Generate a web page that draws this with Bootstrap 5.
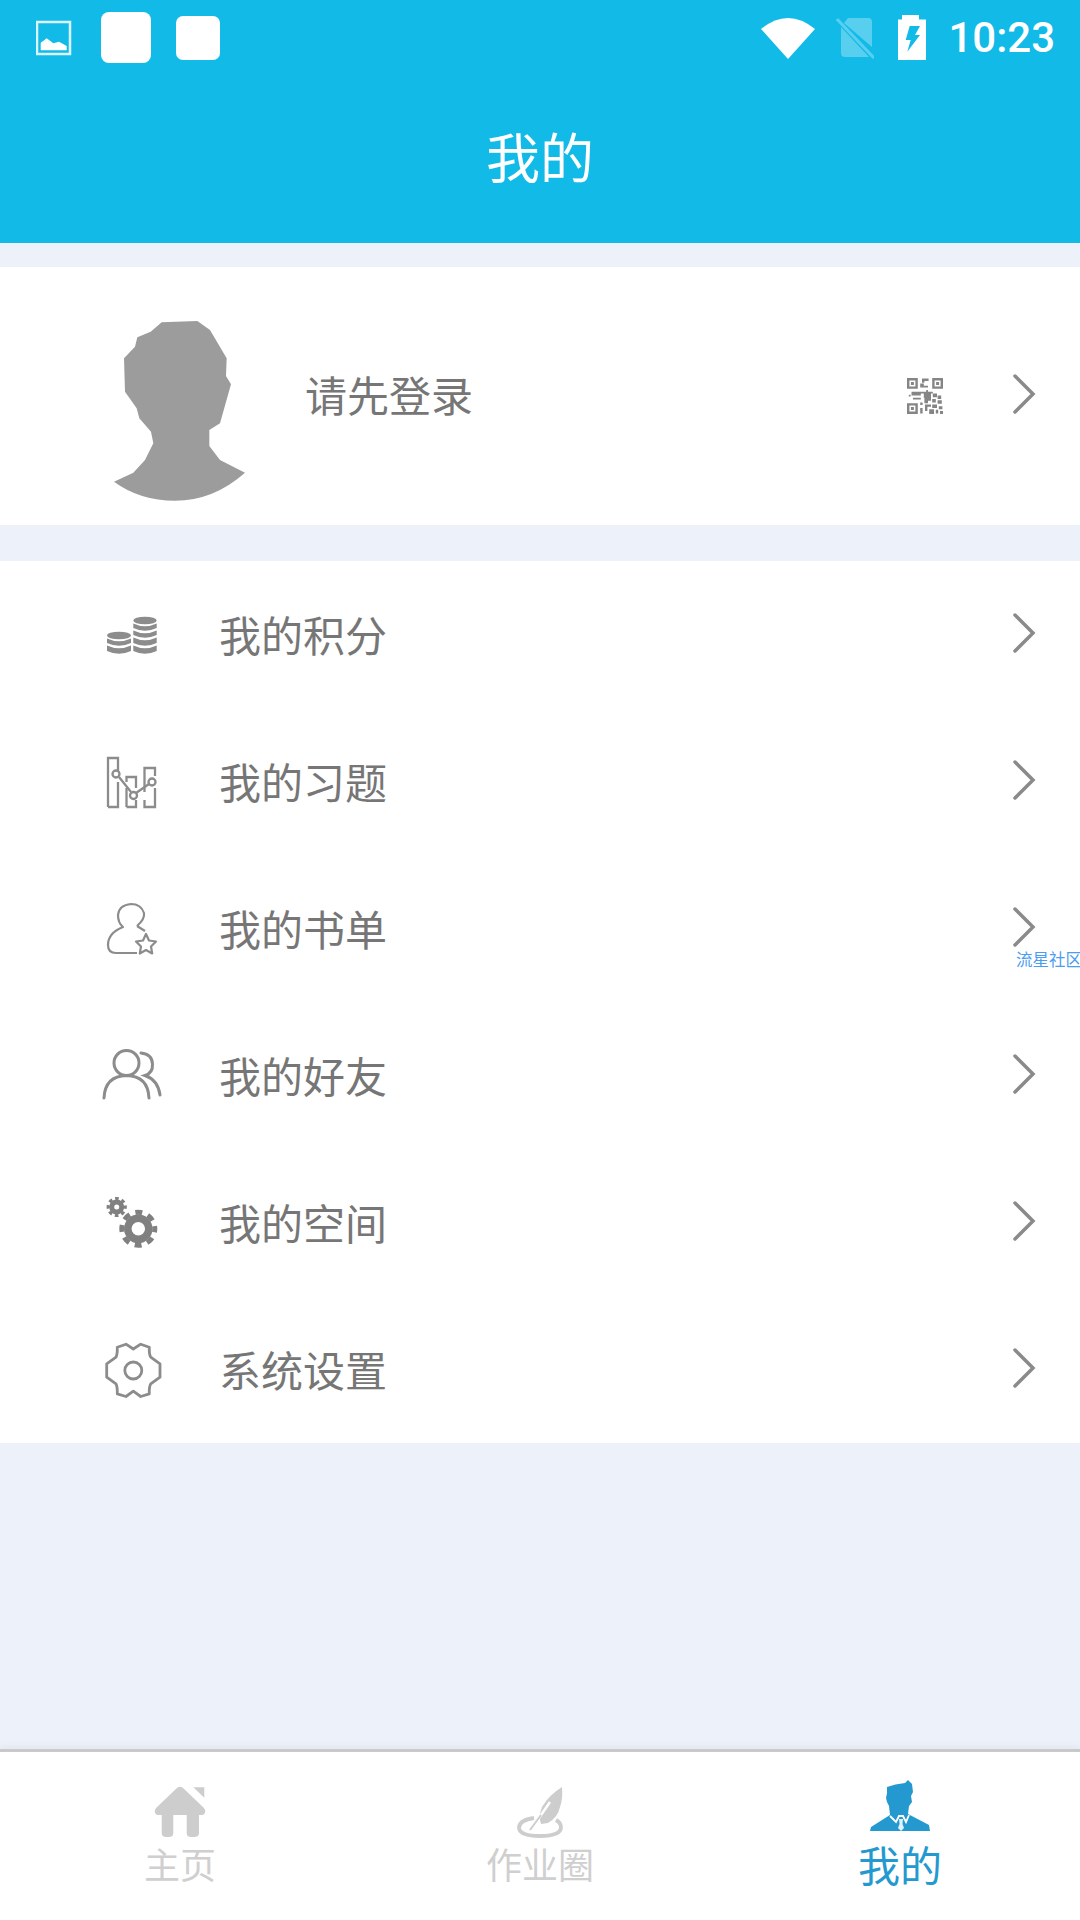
<!DOCTYPE html>
<html lang="zh">
<head>
<meta charset="utf-8">
<title>我的</title>
<link href="https://cdn.jsdelivr.net/npm/bootstrap@5.3.0/dist/css/bootstrap.min.css" rel="stylesheet">
<style>
html,body{margin:0;background:#edf1fa;}
body{width:1080px;height:1920px;overflow:hidden;font-family:"Noto Sans CJK SC","Noto Sans",sans-serif;color:#767676;}
.app-shell{height:1920px;position:relative;}
.app-head{height:243px;background:#12bae8;color:#fff;}
.status-strip{height:75px;padding:0 25px 0 36px;}
.status-left{gap:29px;}
.status-right{gap:21px;}
.status-time{font-family:Roboto,"Liberation Sans",sans-serif;font-size:42px;line-height:1;font-weight:500;margin-left:1px;}
.batt-pic{margin-left:3px;}
.note-a{width:50px;height:51px;background:#fff;border-radius:8px;}
.note-b{width:44px;height:44px;background:#fff;border-radius:7px;margin-left:-4px;}
.app-title{height:168px;font-size:54px;line-height:1;padding-bottom:6px;}
.profile-box{height:258px;margin-top:24px;background:#fff;padding-left:113px;padding-right:42px;}
.avatar-pic{margin-top:30px;margin-right:58px;display:block;}
.row-label{font-size:42px;line-height:1;color:#767676;padding-bottom:2px;}
.login-label{padding-bottom:4px;}
.qr-pic{margin-right:69px;display:block;}
.menu-box{margin-top:36px;border-radius:0;}
.menu-line.list-group-item{height:147px;border:0;background:#fff;padding:0 42px 0 100px;display:flex;align-items:center;}
.menu-icon{width:60px;height:60px;margin-right:59px;flex:none;overflow:visible;}
.chev-pic{display:block;margin-top:-4px;}
.spacer-fill{flex:1 1 auto;}
.tab-bar{height:171px;background:#fff;border-top:3px solid #c9c9c9;box-shadow:0 -4px 6px rgba(0,0,0,.035);}
.tab-cell{padding:0;height:168px;position:relative;color:#cfcfcf;font-size:36px;line-height:1;}
.tab-cell.tab-on{color:#2499d0;font-size:42px;}
.tab-pic{position:absolute;top:33px;left:50%;transform:translateX(-50%);display:block;}
.tab-on .tab-pic{top:26px;}
.tab-name{position:absolute;left:0;right:0;top:93px;text-align:center;}
.tab-on .tab-name{top:91px;}
.water-tag{position:absolute;right:-2px;top:949px;font-size:16.5px;line-height:20px;color:#4a9df0;white-space:nowrap;}
</style>
</head>
<body>
<div class="app-shell d-flex flex-column">
  <header class="app-head">
    <div class="status-strip d-flex align-items-center justify-content-between">
      <div class="status-left d-flex align-items-center">
        <svg width="36" height="36" viewBox="0 0 36 36"><rect x="1" y="2" width="33" height="32" fill="none" stroke="#fff" stroke-opacity=".85" stroke-width="2.500"/><path d="M4.700 30.300V22.700L10.700 18.300 17.300 23.300 23 21.700 30.700 26V30.300Z" fill="#fff"/></svg>
        <div class="note-a"></div>
        <div class="note-b"></div>
      </div>
      <div class="status-right d-flex align-items-center">
        <svg width="54" height="42" viewBox="0 0 54 42"><path d="M0 12Q27-10 54 12L27 42Z" fill="#fff"/></svg>
        <svg width="38" height="42" viewBox="0 0 38 42"><path d="M8 6 12 1H32Q36 1 36 5V30ZM33 40H9Q5 40 5 36V10Z" fill="#fff" fill-opacity=".3"/><path d="M1 2 38 41" stroke="#fff" stroke-opacity=".3" stroke-width="3"/></svg>
        <svg class="batt-pic" width="28" height="45" viewBox="0 0 28 45"><path d="M4 0H21V4.500H28V45H0V4.500H4Z" fill="#fff"/><path d="M11.700 11H22L17 20H22L9.300 36.700 12.700 25H7.700Z" fill="#12bae8"/></svg>
        <span class="status-time">10:23</span>
      </div>
    </div>
    <div class="app-title d-flex align-items-center justify-content-center">我的</div>
  </header>

  <section class="profile-box d-flex align-items-center">
    <svg class="avatar-pic" width="134" height="182" viewBox="100 90 400 546"><path d="M245 97 352 93 390 120 440 205 438 258 453 283 420 400 388 420 388 468 420 510 495 548Q400 632 285 632 180 632 102 575L160 548 195 510 220 460 213 425 178 385 170 355 135 305 132 205 165 170 172 142 212 125Z" fill="#9b9c9b"/></svg>
    <span class="row-label login-label flex-grow-1">请先登录</span>
    <svg class="qr-pic" width="36" height="36" viewBox="0 0 12 12"><g fill="#858585"><path d="M0 0H3.600V3.600H0ZM.8.8V2.800H2.800V.8ZM1.300 1.300H2.300V2.300H1.300Z" fill-rule="evenodd"/><path d="M8.400 0H12V3.600H8.400ZM9.200.8V2.800H11.200V.8ZM9.700 1.300H10.700V2.300H9.700Z" fill-rule="evenodd"/><path d="M0 8.400H3.600V12H0ZM.8 9.200V11.200H2.800V9.200ZM1.300 9.700H2.300V10.700H1.300Z" fill-rule="evenodd"/><path d="M5 .2H7.200V1H5.800V1.600H5ZM4.400 1.800H5.600V2.600H7V3.200H4.400ZM6.400 4H7V4.600H6.400ZM1.500 4.600H8.600V5.200H4.600V5.800H1.500ZM.6 5.600H1.200V6.200H.6ZM5.600 5.200H8V7.600H7V8.400H5.800V6.600H5.600ZM8.600 5.200H10V6.400H8.600ZM10.200 5.800H11.400V7H10.200ZM2 6.600H4.600V7.200H2ZM8.400 7H9.600V8.200H8.400ZM10.200 7.400H11.600V8.600H10.200ZM4.400 8.200H5.200V9H4.400ZM6 8.800H8V9.600H6.800V11H6ZM8.400 8.800H10V10H8.400ZM10.600 9.400H11.800V10.400H10.600ZM4.400 10H5.200V11.800H4.400ZM7.400 10.400H9V12H7.400ZM9.600 10.600H10.400V11.800H9.600ZM11 11H12V12H11Z"/></g></svg>
    <svg class="chev-pic" width="26" height="42" viewBox="0 0 26 42"><path d="M3 3 21 21 3 39" fill="none" stroke="#8a8a8a" stroke-width="3.500" stroke-linecap="round"/></svg>
  </section>

  <div class="menu-box list-group list-group-flush">
    <a class="menu-line list-group-item">
      <svg class="menu-icon" viewBox="0 0 60 60"><g fill="#8c8c8c"><ellipse cx="19" cy="30.500" rx="12" ry="3.800"/><path d="M7 33.500Q19 39 31 33.500V38Q19 43.500 7 38ZM7 40.500Q19 46 31 40.500V46Q19 51.500 7 46Z"/><ellipse cx="45" cy="15.500" rx="11.700" ry="3.800"/><path d="M33.300 18.500Q45 24 56.700 18.500V23Q45 28.500 33.300 23ZM33.300 25.500Q45 31 56.700 25.500V30Q45 35.500 33.300 30ZM33.300 32.500Q45 38 56.700 32.500V38Q45 43.500 33.300 38ZM33.300 40.500Q45 46 56.700 40.500V46Q45 51.500 33.300 46Z"/></g></svg>
      <span class="row-label flex-grow-1">我的积分</span>
      <svg class="chev-pic" width="26" height="42" viewBox="0 0 26 42"><path d="M3 3 21 21 3 39" fill="none" stroke="#8a8a8a" stroke-width="3.500" stroke-linecap="round"/></svg>
    </a>
    <a class="menu-line list-group-item">
      <svg class="menu-icon" viewBox="0 0 60 60"><g fill="none" stroke="#8c8c8c" stroke-width="2.300"><path d="M8 55V6H18V20M18 30V55H8M26.500 55V36M26.500 30V25H36V36M36 48V55H26.500M44.500 40V16H55V24M55 36V55H44.500V48"/><path d="M19 25 31 40M36 41 49 32"/><circle cx="16" cy="22" r="3.500"/><circle cx="33.500" cy="43.500" r="3.500"/><circle cx="52" cy="30" r="3.500"/></g></svg>
      <span class="row-label flex-grow-1">我的习题</span>
      <svg class="chev-pic" width="26" height="42" viewBox="0 0 26 42"><path d="M3 3 21 21 3 39" fill="none" stroke="#8a8a8a" stroke-width="3.500" stroke-linecap="round"/></svg>
    </a>
    <a class="menu-line list-group-item">
      <svg class="menu-icon" viewBox="0 0 60 60"><g fill="none" stroke="#8c8c8c" stroke-width="2.200" stroke-linejoin="round"><path d="M37 27Q45 20 44 14 41 5 31 5 19 6 18 16 18 24 23 28 8 34 8 46 8 54 16 54H37M37 27 45 32"/><path d="M46 35 49 41.500 56 42.500 51 47.500 52.200 54.500 46 51 39.800 54.500 41 47.500 36 42.500 43 41.500Z"/></g></svg>
      <span class="row-label flex-grow-1">我的书单</span>
      <svg class="chev-pic" width="26" height="42" viewBox="0 0 26 42"><path d="M3 3 21 21 3 39" fill="none" stroke="#8a8a8a" stroke-width="3.500" stroke-linecap="round"/></svg>
    </a>
    <a class="menu-line list-group-item">
      <svg class="menu-icon" viewBox="0 0 60 60"><g fill="none" stroke="#8c8c8c" stroke-width="3" stroke-linecap="round"><circle cx="26.500" cy="17" r="12.500"/><path d="M4 52Q5 30 26.500 29.500 48 30 49 52"/><path d="M41 7Q52 8 52.500 18 53 27 45 29.500 58 34 60 49"/></g></svg>
      <span class="row-label flex-grow-1">我的好友</span>
      <svg class="chev-pic" width="26" height="42" viewBox="0 0 26 42"><path d="M3 3 21 21 3 39" fill="none" stroke="#8a8a8a" stroke-width="3.500" stroke-linecap="round"/></svg>
    </a>
    <a class="menu-line list-group-item">
      <svg class="menu-icon" viewBox="0 0 60 60"><g fill="none" stroke="#808080"><circle cx="38.300" cy="35.800" r="10.500" stroke-width="7.500"/><circle cx="38.300" cy="35.800" r="16.500" stroke-width="5" stroke-dasharray="7 5.960" stroke-dashoffset="3.500"/><circle cx="16.700" cy="14" r="5" stroke-width="5"/><circle cx="16.700" cy="14" r="8.500" stroke-width="3.200" stroke-dasharray="3.600 3.070" stroke-dashoffset="1.800"/></g></svg>
      <span class="row-label flex-grow-1">我的空间</span>
      <svg class="chev-pic" width="26" height="42" viewBox="0 0 26 42"><path d="M3 3 21 21 3 39" fill="none" stroke="#8a8a8a" stroke-width="3.500" stroke-linecap="round"/></svg>
    </a>
    <a class="menu-line list-group-item">
      <svg class="menu-icon" viewBox="0 0 60 60"><g fill="none" stroke="#8c8c8c" stroke-width="2.800" stroke-linejoin="round"><path d="M33.300 9 26 4.200 17.300 7.200Q17.500 14 16 17.200L6.700 23.800V37.200L16 43.900Q17.500 47 17.300 53.800L26 56.500 33.300 51.200 40.700 56.500 49.300 53.800Q49 47 50.700 43.900L60 37.200V23.800L50.700 17.200Q49 14 49.300 7.200L40.700 4.200Z"/><circle cx="33.300" cy="30.500" r="8.500"/></g></svg>
      <span class="row-label flex-grow-1">系统设置</span>
      <svg class="chev-pic" width="26" height="42" viewBox="0 0 26 42"><path d="M3 3 21 21 3 39" fill="none" stroke="#8a8a8a" stroke-width="3.500" stroke-linecap="round"/></svg>
    </a>
  </div>

  <div class="spacer-fill"></div>

  <nav class="tab-bar row g-0">
    <div class="tab-cell col-4">
      <svg class="tab-pic" width="60" height="54" viewBox="0 0 60 54"><path d="M27 3Q30 .5 33 3L54 23Q57 27 53 30H49V48Q49 52 44 52H41Q36.700 52 36.700 48V30H23.300V48Q23.300 52 19 52H16Q11.700 52 11.700 48V30H7Q3 27 6 23ZM43.300 2.300H54.300V12.700Z" fill="#cdcdcd"/></svg>
      <div class="tab-name">主页</div>
    </div>
    <div class="tab-cell col-4">
      <svg class="tab-pic" width="60" height="54" viewBox="-2 0 60 54"><path d="M50 2Q51 14 48 22 46 32 36 38L29 39Q26 32 30 22 37 10 50 2Z" fill="#cdcdcd"/><path d="M18 46 38 17" stroke="#fff" stroke-width="2.500"/><path d="M18 45 29 30" stroke="#cdcdcd" stroke-width="2"/><path d="M22 33Q7 35 7 43 8 51 28 51 49 51 49 42 49 38 44 35" fill="none" stroke="#cdcdcd" stroke-width="3.800"/></svg>
      <div class="tab-name">作业圈</div>
    </div>
    <div class="tab-cell tab-on col-4">
      <svg class="tab-pic" width="70" height="56" viewBox="0 0 70 56"><path d="M22 9Q30 6 40 5L43 2 47 6 48 14 46 18 47 24 44 28 43 36 64 47 65 53H5L6 49 25 37 24 28 22 24 21 20 22 15Z" fill="#2499d0"/><path d="M25 38 31 44 34 38H38L41 44 44 37" fill="none" stroke="#fff" stroke-width="1.800"/><path d="M34 41H38L37.500 46 39 50 36 53 33 50 34.500 46Z" fill="#dff1f9"/></svg>
      <div class="tab-name">我的</div>
    </div>
  </nav>

  <div class="water-tag">流星社区</div>
</div>
<script src="https://cdn.jsdelivr.net/npm/bootstrap@5.3.0/dist/js/bootstrap.bundle.min.js"></script>
</body>
</html>
